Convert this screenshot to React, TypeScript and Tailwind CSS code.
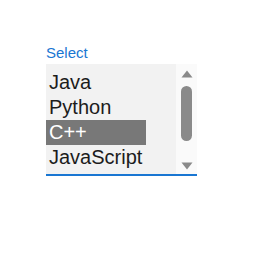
const options = ['Java', 'Python', 'C++', 'JavaScript', 'C#'];

export default function App() {
  return (
    <div className="min-h-[266px] bg-white pl-[46px] pt-[44px] font-['Liberation_Sans',Arial,sans-serif]">
      <label className="block text-[15px] leading-[18px] text-[#1976d2]">Select</label>
      <div className="mt-[2px] flex h-[112px] w-[151px] overflow-hidden border-b-2 border-[#1976d2] bg-[#f2f2f2]">
        {/* list */}
        <div className="w-[130px] pt-[6px]">
          {options.map((opt) => (
            <div
              key={opt}
              className={
                opt === 'C++'
                  ? 'h-[25px] w-[100px] bg-[#787878] pl-[3px] text-[20px] leading-[25px] text-white'
                  : 'h-[25px] pl-[3px] text-[20px] leading-[25px] text-[#1c1c1c]'
              }
            >
              {opt}
            </div>
          ))}
        </div>
        {/* scrollbar */}
        <div className="flex w-[21px] flex-col items-center bg-[#fafafa] pt-[6px]">
          <svg width="12" height="8" viewBox="0 0 12 8">
            <path d="M6 0.5 L11.5 7.5 L0.5 7.5 Z" fill="#8a8a8a" />
          </svg>
          <div className="mt-[8px] h-[55px] w-[11px] rounded-full bg-[#8a8a8a]" />
          <div className="flex-1" />
          <svg width="12" height="8" viewBox="0 0 12 8" className="mb-[4px]">
            <path d="M0.5 0.5 L11.5 0.5 L6 7.5 Z" fill="#8a8a8a" />
          </svg>
        </div>
      </div>
    </div>
  );
}
